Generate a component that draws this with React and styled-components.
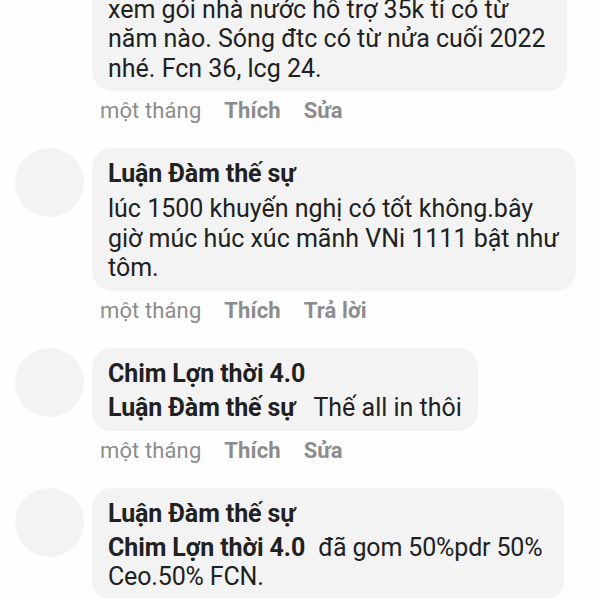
import styled, { createGlobalStyle } from "styled-components";

const comments = [
  {
    id: 1,
    lines: ["xem gói nhà nước hỗ trợ 35k tỉ có từ", "năm nào. Sóng đtc có từ nửa cuối 2022", "nhé. Fcn 36, lcg 24."],
    action: "Sửa",
    width: 475,
    height: 142,
  },
  {
    id: 2,
    name: "Luận Đàm thế sự",
    lines: ["lúc 1500 khuyến nghị có tốt không.bây", "giờ múc húc xúc mãnh VNi 1111 bật như", "tôm."],
    action: "Trả lời",
    width: 484,
    height: 142.5,
  },
  {
    id: 3,
    name: "Chim Lợn thời 4.0",
    mention: "Luận Đàm thế sự",
    lines: ["Thế all in thôi"],
    action: "Sửa",
    width: 386,
    height: 83.5,
  },
  {
    id: 4,
    name: "Luận Đàm thế sự",
    mention: "Chim Lợn thời 4.0",
    lines: ["đã gom 50%pdr 50%", "Ceo.50% FCN."],
    action: "",
    width: 472,
    height: 112.5,
  },
];

const Comment = ({ comment }) => {
  const { name, mention, lines, action, width, height } = comment;

  return (
    <Row>
      <Avatar $hidden={!name} />
      <div>
        <Bubble $width={width} $height={height} $bottom={mention ? 9 : 8}>
          {name && <Name $gap={mention ? 5 : 6}>{name}</Name>}
          {lines.map((line, i) => (
            <Line key={line} $tight={line.includes("%")}>
              {i === 0 && mention && <Mention $gap={mention.startsWith("Chim") ? 13 : 18}>{mention}</Mention>}
              {line}
            </Line>
          ))}
        </Bubble>
        {action && (
          <Actions>
            <Time>một tháng</Time>
            <Action>Thích</Action>
            <Action>{action}</Action>
          </Actions>
        )}
      </div>
    </Row>
  );
};

const App = () => {
  return (
    <Page>
      <GlobalStyle />
      <Thread>
        {comments.map((comment) => (
          <Comment key={comment.id} comment={comment} />
        ))}
      </Thread>
    </Page>
  );
};

export default App;

const GlobalStyle = createGlobalStyle`
  body {
    margin: 0;
    background: #fefefe;
    overflow: hidden;
  }
`;

const Page = styled.div`
  box-sizing: border-box;
  height: 600px;
  border-bottom: 2px solid #fefefe;
  overflow: hidden;
  font-family: Roboto, "Noto Sans", sans-serif;
  color: #212121;
`;

const Thread = styled.div`
  display: flex;
  flex-direction: column;
  margin-top: -51px;
`;

const Row = styled.div`
  display: flex;
  gap: 8px;
  padding-left: 15px;
`;

const Avatar = styled.div`
  flex: none;
  width: 69px;
  height: 69px;
  border-radius: 50%;
  background: #f3f3f3;
  visibility: ${({ $hidden }) => ($hidden ? "hidden" : "visible")};
`;

const Bubble = styled.div`
  display: flex;
  flex-direction: column;
  justify-content: flex-end;
  box-sizing: border-box;
  width: ${({ $width }) => $width}px;
  height: ${({ $height }) => $height}px;
  padding: 0 16px ${({ $bottom }) => $bottom}px;
  border-radius: 20px;
  background: #f3f3f3;
`;

const Name = styled.div`
  margin-bottom: ${({ $gap }) => $gap}px;
  font-size: 25px;
  line-height: 29px;
  font-weight: 700;
  letter-spacing: -0.1px;
  white-space: nowrap;
`;

const Line = styled.div`
  height: 29.4px;
  font-size: 25px;
  line-height: 29.4px;
  letter-spacing: ${({ $tight }) => ($tight ? "-0.15px" : "normal")};
  white-space: pre;
`;

const Mention = styled.span`
  margin-right: ${({ $gap }) => $gap}px;
  font-weight: 700;
  letter-spacing: -0.1px;
`;

const Actions = styled.div`
  display: flex;
  align-items: center;
  gap: 23px;
  box-sizing: border-box;
  height: 57px;
  padding: 0 0 17.5px 8px;
  font-size: 22px;
  letter-spacing: 0.12px;
  color: #8c8c8c;
`;

const Time = styled.span``;

const Action = styled.span`
  font-weight: 700;
`;
